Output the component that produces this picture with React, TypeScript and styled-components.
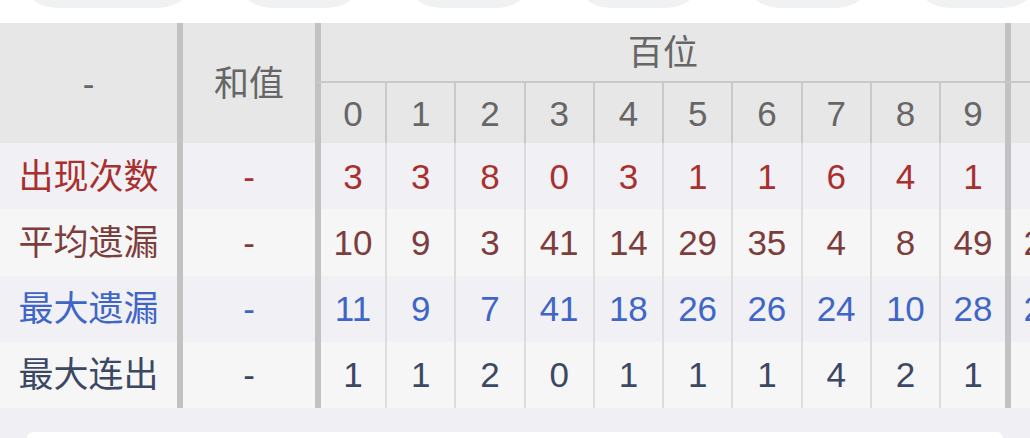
import React from "react";
import styled, { createGlobalStyle } from "styled-components";

const Global = createGlobalStyle`
  html, body { margin: 0; padding: 0; background: #ffffff; }
  body { font-family: "Liberation Sans", "Noto Sans CJK SC", sans-serif; overflow: hidden; }
  #root { width: 1030px; height: 438px; overflow: hidden; }
`;

const Page = styled.div`
  width: 1030px;
  height: 438px;
  overflow: hidden;
  display: flex;
  flex-direction: column;
  background: #f0f0f4;
`;

const TopStrip = styled.div`
  height: 23px;
  flex: none;
  background: #ffffff;
  display: flex;
  align-items: flex-start;
  gap: 34px;
  padding-left: 17px;
  overflow: hidden;
`;

const Pill = styled.div<{ $w: number }>`
  flex: none;
  width: ${(p) => p.$w}px;
  height: 80px;
  margin-top: -72.5px;
  border-radius: 40px;
  background: #f0f1f3;
`;

const Grid = styled.div`
  flex: none;
  display: grid;
  grid-template-columns: 177px 138px 70px repeat(8, 69.25px) 66px 70px repeat(9, 69.25px);
  grid-template-rows: 60px 60px repeat(4, 66.25px);
  width: max-content;
`;

type Tone = "head" | "odd" | "even";
type Edge = "none" | "thick" | "thin";

const toneBg: Record<Tone, string> = {
  head: "#e7e7e7",
  odd: "#f1f1f5",
  even: "#f6f6f6",
};

const Cell = styled.div<{
  $tone: Tone;
  $edge: Edge;
  $color: string;
  $rows?: number;
  $cols?: number;
  $underline?: boolean;
}>`
  box-sizing: border-box;
  display: flex;
  align-items: center;
  justify-content: center;
  white-space: nowrap;
  overflow: hidden;
  font-size: 35px;
  line-height: 1;
  color: ${(p) => p.$color};
  background: ${(p) => toneBg[p.$tone]};
  grid-row: ${(p) => (p.$rows ? `span ${p.$rows}` : "auto")};
  grid-column: ${(p) => (p.$cols ? `span ${p.$cols}` : "auto")};
  border-left: ${(p) =>
    p.$edge === "thick"
      ? "6px solid #c2c2c2"
      : p.$edge === "thin"
      ? `2px solid ${p.$tone === "head" ? "#c9c9c9" : "#dcdcdc"}`
      : "none"};
  border-bottom: ${(p) => (p.$underline ? "2px solid #c9c9c9" : "none")};
`;

const LabelCell = styled(Cell)`
  letter-spacing: 0;
`;

const BottomGap = styled.div`
  height: 24px;
  flex: none;
`;

const Card = styled.div`
  flex: 1;
  margin: 0 27px;
  background: #ffffff;
  border-radius: 14px 14px 0 0;
`;

const HEAD = "#666666";

type Row = { label: string; color: string; tone: Tone; hundreds: string[]; tens: string[] };

const rows: Row[] = [
  {
    label: "出现次数",
    color: "#a8302f",
    tone: "odd",
    hundreds: ["3", "3", "8", "0", "3", "1", "1", "6", "4", "1"],
    tens: ["3", "2", "5", "4", "1", "3", "2", "6", "2", "2"],
  },
  {
    label: "平均遗漏",
    color: "#7d3d3d",
    tone: "even",
    hundreds: ["10", "9", "3", "41", "14", "29", "35", "4", "8", "49"],
    tens: ["20", "12", "6", "8", "24", "10", "13", "5", "17", "14"],
  },
  {
    label: "最大遗漏",
    color: "#3f66c6",
    tone: "odd",
    hundreds: ["11", "9", "7", "41", "18", "26", "26", "24", "10", "28"],
    tens: ["24", "19", "12", "14", "30", "21", "16", "9", "20", "22"],
  },
  {
    label: "最大连出",
    color: "#3c4863",
    tone: "even",
    hundreds: ["1", "1", "2", "0", "1", "1", "1", "4", "2", "1"],
    tens: ["1", "1", "1", "2", "1", "1", "1", "2", "1", "1"],
  },
];

const digits = ["0", "1", "2", "3", "4", "5", "6", "7", "8", "9"];
const pills = [181, 135, 136, 135, 136, 133];

export default function App() {
  return (
    <>
      <Global />
      <Page>
        <TopStrip>
          {pills.map((w, i) => (
            <Pill key={i} $w={w} />
          ))}
        </TopStrip>
        <Grid>
          <LabelCell $tone="head" $edge="none" $color={HEAD} $rows={2}>
            -
          </LabelCell>
          <Cell $tone="head" $edge="thick" $color={HEAD} $rows={2}>
            和值
          </Cell>
          <Cell $tone="head" $edge="thick" $color={HEAD} $cols={10} $underline>
            百位
          </Cell>
          <Cell $tone="head" $edge="thick" $color={HEAD} $cols={10} $underline>
            十位
          </Cell>
          {[0, 1].map((g) =>
            digits.map((d, i) => (
              <Cell key={`h${g}-${d}`} $tone="head" $edge={i === 0 ? "thick" : "thin"} $color={HEAD}>
                {d}
              </Cell>
            ))
          )}
          {rows.map((r) => (
            <React.Fragment key={r.label}>
              <LabelCell $tone={r.tone} $edge="none" $color={r.color}>
                {r.label}
              </LabelCell>
              <Cell $tone={r.tone} $edge="thick" $color={r.color}>
                -
              </Cell>
              {[r.hundreds, r.tens].map((vals, g) =>
                vals.map((v, i) => (
                  <Cell
                    key={`${r.label}-${g}-${i}`}
                    $tone={r.tone}
                    $edge={i === 0 ? "thick" : "thin"}
                    $color={r.color}
                  >
                    {v}
                  </Cell>
                ))
              )}
            </React.Fragment>
          ))}
        </Grid>
        <BottomGap />
        <Card />
      </Page>
    </>
  );
}
